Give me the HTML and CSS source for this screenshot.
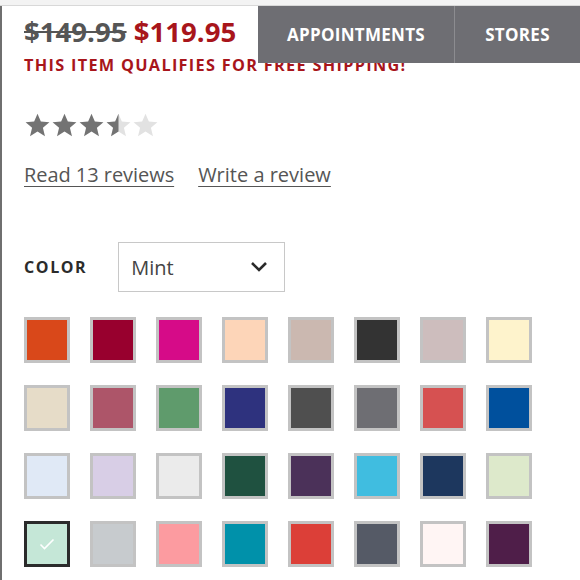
FILE: index.html
```html
<!DOCTYPE html>
<html>
<head>
<meta charset="utf-8">
<link rel="stylesheet" href="styles.css">
</head>
<body>
<div class="page">
  <div class="topstrip"></div>
  <div class="content">
    <div class="price"><span class="old">$149.95</span> <span class="new">$119.95</span></div>
    <div class="ship">THIS ITEM QUALIFIES FOR FREE SHIPPING!</div>
    <div class="stars">
      <svg width="27" height="26" viewBox="0 0 24 24"><path class="on" d="M12 1.5l3.1 7.3 7.9.6-6 5.2 1.9 7.7L12 18.1 5.1 22.3 7 14.6 1 9.4l7.9-.6z"/></svg>
      <svg width="27" height="26" viewBox="0 0 24 24"><path class="on" d="M12 1.5l3.1 7.3 7.9.6-6 5.2 1.9 7.7L12 18.1 5.1 22.3 7 14.6 1 9.4l7.9-.6z"/></svg>
      <svg width="27" height="26" viewBox="0 0 24 24"><path class="on" d="M12 1.5l3.1 7.3 7.9.6-6 5.2 1.9 7.7L12 18.1 5.1 22.3 7 14.6 1 9.4l7.9-.6z"/></svg>
      <svg width="27" height="26" viewBox="0 0 24 24"><defs><clipPath id="half"><rect x="0" y="0" width="12" height="24"/></clipPath></defs><path class="off" d="M12 1.5l3.1 7.3 7.9.6-6 5.2 1.9 7.7L12 18.1 5.1 22.3 7 14.6 1 9.4l7.9-.6z"/><path class="on" clip-path="url(#half)" d="M12 1.5l3.1 7.3 7.9.6-6 5.2 1.9 7.7L12 18.1 5.1 22.3 7 14.6 1 9.4l7.9-.6z"/></svg>
      <svg width="27" height="26" viewBox="0 0 24 24"><path class="off" d="M12 1.5l3.1 7.3 7.9.6-6 5.2 1.9 7.7L12 18.1 5.1 22.3 7 14.6 1 9.4l7.9-.6z"/></svg>
    </div>
    <div class="links"><a href="#">Read 13 reviews</a><a href="#">Write a review</a></div>
    <div class="colorrow">
      <span class="label">COLOR</span>
      <div class="select"><span>Mint</span>
        <svg width="18" height="12" viewBox="0 0 18 12"><path d="M2 2l7 7 7-7" fill="none" stroke="#2a2a2a" stroke-width="2.6"/></svg>
      </div>
    </div>
    <div class="swatches">
      <div class="sw" style="background:#d9481a"></div>
      <div class="sw" style="background:#98002e"></div>
      <div class="sw" style="background:#d60b88"></div>
      <div class="sw" style="background:#fdd5b8"></div>
      <div class="sw" style="background:#cbb8b0"></div>
      <div class="sw" style="background:#333333"></div>
      <div class="sw" style="background:#cdbdbd"></div>
      <div class="sw" style="background:#fef3cc"></div>

      <div class="sw" style="background:#e6dcc8"></div>
      <div class="sw" style="background:#ad5569"></div>
      <div class="sw" style="background:#5f9b6c"></div>
      <div class="sw" style="background:#2e327e"></div>
      <div class="sw" style="background:#4f4f4f"></div>
      <div class="sw" style="background:#6e6e73"></div>
      <div class="sw" style="background:#d65151"></div>
      <div class="sw" style="background:#00509d"></div>

      <div class="sw" style="background:#e0e9f6"></div>
      <div class="sw" style="background:#d8cee6"></div>
      <div class="sw" style="background:#ebebeb"></div>
      <div class="sw" style="background:#1f5140"></div>
      <div class="sw" style="background:#4b3159"></div>
      <div class="sw" style="background:#40bde0"></div>
      <div class="sw" style="background:#1d375e"></div>
      <div class="sw" style="background:#dde9cb"></div>

      <div class="sw selected" style="background:#c5e7d7"><svg width="16" height="12" viewBox="0 0 16 12"><path d="M1.5 6.5l4 4 9-9" fill="none" stroke="#fff" stroke-width="1.6"/></svg></div>
      <div class="sw" style="background:#c7cbce"></div>
      <div class="sw" style="background:#fc9ba0"></div>
      <div class="sw" style="background:#0091aa"></div>
      <div class="sw" style="background:#dc3f38"></div>
      <div class="sw" style="background:#555a66"></div>
      <div class="sw" style="background:#fff5f4"></div>
      <div class="sw" style="background:#4f1e49"></div>
    </div>
  </div>
  <div class="topnav">
    <a class="navbtn appt" href="#">APPOINTMENTS</a>
    <a class="navbtn stores" href="#">STORES</a>
  </div>
</div>
</body>
</html>
```
FILE: styles.css
```css
* { box-sizing: border-box; }
html, body { margin: 0; padding: 0; background: #fff; }
body { font-family: "Open Sans", "DejaVu Sans", sans-serif; width: 580px; height: 580px; overflow: hidden; }

.page { position: relative; width: 580px; height: 580px; }
.topstrip { height: 6px; background: #f3f3f3; border-bottom: 1px solid #d8d8d8; }
.content { border-left: 2px solid #6f6f6f; padding-left: 22px; height: 574px; padding-top: 9px; }

.price { font-size: 27.6px; line-height: 32px; font-weight: 700; white-space: nowrap; }
.price .old { color: #555; text-decoration: line-through; text-decoration-thickness: 2px; }
.price .new { color: #a8151b; }

.ship { margin-top: 8px; color: #a8151b; font-weight: 700; font-size: 16.3px; line-height: 20px; letter-spacing: 1.3px; white-space: nowrap; }

.stars { margin-top: 37px; display: flex; height: 26px; }
.stars svg { display: block; }
.stars .on { fill: #737373; }
.stars .off { fill: #e2e2e2; }

.links { margin-top: 25px; display: flex; gap: 24px; font-size: 20px; line-height: 24px; }
.links a { color: #555; text-decoration: underline; text-underline-offset: 4px; text-decoration-thickness: 1px; }
.links a:first-child { letter-spacing: -0.05px; }

.colorrow { margin-top: 55px; display: flex; align-items: center; gap: 31px; }
.label { font-weight: 700; font-size: 16px; letter-spacing: 1.6px; color: #2b2b2b; }
.select { width: 167px; height: 50px; border: 1px solid #c8c8c8; display: flex; align-items: center; justify-content: space-between; padding: 0 16px 0 12px; font-size: 20px; color: #444; }
.select svg { display: block; }

.swatches { margin-top: 25px; display: grid; grid-template-columns: repeat(8, 46px); column-gap: 20px; row-gap: 22px; }
.sw { width: 46px; height: 46px; border: 3px solid #c3c3c3; display: flex; align-items: center; justify-content: center; }
.sw.selected { border-color: #2b2b2b; }
.sw svg { display: block; }

.topnav { position: absolute; top: 6px; left: 258px; right: 0; height: 57px; display: flex; background: #6e6e73; }
.navbtn { display: flex; align-items: center; justify-content: center; color: #fff; text-decoration: none; font-weight: 700; font-size: 17px; letter-spacing: 0.3px; }
.appt { width: 197px; border-right: 1px solid #8c8c90; }
.stores { flex: 1; }
```
